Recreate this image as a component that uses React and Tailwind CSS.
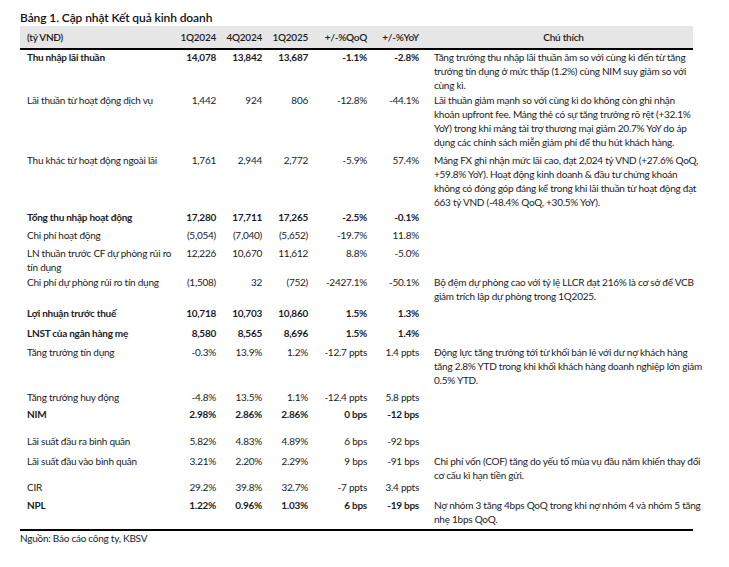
import React from "react";

const rows = [
  { label: ["Thu nhập lãi thuần"], v: ["14,078", "13,842", "13,687", "-1.1%", "-2.8%"], bold: true, h: "h-[43px]",
    c: ["Tăng trưởng thu nhập lãi thuần âm so với cùng kì đến từ tăng", "trưởng tín dụng ở mức thấp (1.2%) cùng NIM suy giảm so với", "cùng kì."] },
  { label: ["Lãi thuần từ hoạt động dịch vụ"], v: ["1,442", "924", "806", "-12.8%", "-44.1%"], h: "h-[60px]",
    c: ["Lãi thuần giảm mạnh so với cùng kì do không còn ghi nhận", "khoản upfront fee. Mảng thẻ có sự tăng trưởng rõ rệt (+32.1%", "YoY) trong khi mảng tài trợ thương mại giảm 20.7% YoY do áp", "dụng các chính sách miễn giảm phí để thu hút khách hàng."] },
  { label: ["Thu khác từ hoạt động ngoài lãi"], v: ["1,761", "2,944", "2,772", "-5.9%", "57.4%"], h: "h-[57px]",
    c: ["Mảng FX ghi nhận mức lãi cao, đạt 2,024 tỷ VND (+27.6% QoQ,", "+59.8% YoY). Hoạt động kinh doanh & đầu tư chứng khoán", "không có đóng góp đáng kể trong khi lãi thuần từ hoạt động đạt", "663 tỷ VND (-48.4% QoQ, +30.5% YoY)."] },
  { label: ["Tổng thu nhập hoạt động"], v: ["17,280", "17,711", "17,265", "-2.5%", "-0.1%"], bold: true, h: "h-[18px]" },
  { label: ["Chi phí hoạt động"], v: ["(5,054)", "(7,040)", "(5,652)", "-19.7%", "11.8%"], h: "h-[18px]" },
  { label: ["LN thuần trước CF dự phòng rủi ro", "tín dụng"], v: ["12,226", "10,670", "11,612", "8.8%", "-5.0%"], h: "h-[29px]" },
  { label: ["Chi phí dự phòng rủi ro tín dụng"], v: ["(1,508)", "32", "(752)", "-2427.1%", "-50.1%"], h: "h-[31px]",
    c: ["Bộ đệm dự phòng cao với tỷ lệ LLCR đạt 216% là cơ sở để VCB", "giảm trích lập dự phòng trong 1Q2025."] },
  { label: ["Lợi nhuận trước thuế"], v: ["10,718", "10,703", "10,860", "1.5%", "1.3%"], bold: true, h: "h-[20px]" },
  { label: ["LNST của ngân hàng mẹ"], v: ["8,580", "8,565", "8,696", "1.5%", "1.4%"], bold: true, h: "h-[19px]" },
  { label: ["Tăng trưởng tín dụng"], v: ["-0.3%", "13.9%", "1.2%", "-12.7 ppts", "1.4 ppts"], h: "h-[45px]",
    c: ["Động lực tăng trưởng tới từ khối bán lẻ với dư nợ khách hàng", "tăng 2.8% YTD trong khi khối khách hàng doanh nghiệp lớn giảm", "0.5% YTD."] },
  { label: ["Tăng trưởng huy động"], v: ["-4.8%", "13.5%", "1.1%", "-12.4 ppts", "5.8 ppts"], h: "h-[17px]" },
  { label: ["NIM"], v: ["2.98%", "2.86%", "2.86%", "0 bps", "-12 bps"], bold: true, h: "h-[27px]" },
  { label: ["Lãi suất đầu ra bình quân"], v: ["5.82%", "4.83%", "4.89%", "6 bps", "-92 bps"], h: "h-[20px]" },
  { label: ["Lãi suất đầu vào bình quân"], v: ["3.21%", "2.20%", "2.29%", "9 bps", "-91 bps"], h: "h-[26px]",
    c: ["Chi phí vốn (COF) tăng do yếu tố mùa vụ đầu năm khiến thay đổi", "cơ cấu kì hạn tiền gửi."] },
  { label: ["CIR"], v: ["29.2%", "39.8%", "32.7%", "-7 ppts", "3.4 ppts"], h: "h-[18px]" },
  { label: ["NPL"], v: ["1.22%", "0.96%", "1.03%", "6 bps", "-19 bps"], bold: true, h: "h-[31px]",
    c: ["Nợ nhóm 3 tăng 4bps QoQ trong khi nợ nhóm 4 và nhóm 5 tăng", "nhẹ 1bps QoQ."] },
];

const colW = ["w-[46px]", "w-[46px]", "w-[46px]", "w-[59px]", "w-[52px]"];

function Lines({ lines }) {
  return lines.map((l, i) => (
    <div key={i} className="whitespace-nowrap">{l}</div>
  ));
}

export default function App() {
  return (
    <div
      className="w-[729px] h-[567px] bg-white text-[#1c1c1c] pt-[9px] pl-[20px]"
      style={{ fontFamily: "Lato, 'Noto Sans', sans-serif" }}
    >
      <div className="text-[12px] leading-[17px] font-semibold tracking-[-0.1px] text-[#111]">
        Bảng 1. Cập nhật Kết quả kinh doanh
      </div>
      <div className="w-[673px] text-[10px] leading-[14px] tracking-[-0.25px]">
        <div className="flex items-center h-[24px] bg-[#e6e6e6] border-b-2 border-black font-semibold">
          <div className="w-[150px] shrink-0 pl-[7px]">(tỷ VNĐ)</div>
          {["1Q2024", "4Q2024", "1Q2025", "+/-%QoQ", "+/-%YoY"].map((t, i) => (
            <div key={i} className={`${colW[i]} shrink-0 text-right whitespace-nowrap`}>{t}</div>
          ))}
          <div className="flex-1 min-w-0 pl-[15px] text-center">Chú thích</div>
        </div>
        {rows.map((r, i) => (
          <div key={i} className={`flex items-start ${r.h}`}>
            <div className={`w-[150px] shrink-0 pl-[7px] ${r.bold ? "font-bold" : ""}`}>
              <Lines lines={r.label} />
            </div>
            {r.v.map((t, j) => (
              <div key={j} className={`${colW[j]} shrink-0 text-right whitespace-nowrap ${r.bold ? "font-bold" : ""}`}>{t}</div>
            ))}
            <div className="flex-1 min-w-0 pl-[15px]">
              {r.c ? <Lines lines={r.c} /> : null}
            </div>
          </div>
        ))}
        <div className="border-t-2 border-black">Nguồn: Báo cáo công ty, KBSV</div>
      </div>
    </div>
  );
}
